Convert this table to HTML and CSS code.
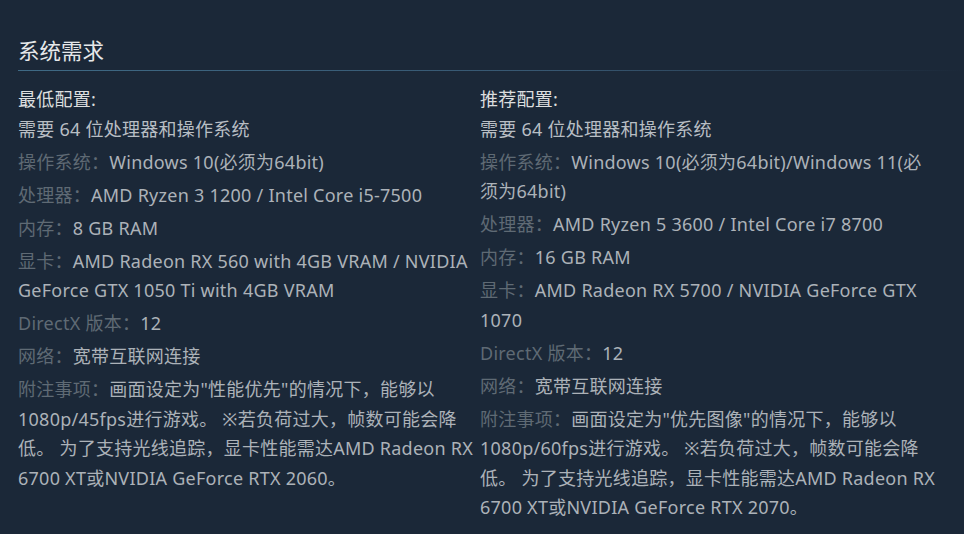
FILE: index.html
```html
<!DOCTYPE html>
<html lang="zh-CN">
<head>
<meta charset="utf-8">
<title>系统需求</title>
<link rel="stylesheet" href="styles.css">
</head>
<body>
<section class="sysreq">
  <h2 class="sysreq-title">系统需求</h2>
  <div class="sysreq-cols">
    <div class="col">
      <ul class="req-list">
        <li class="req-head"><strong class="req-head-label">最低配置:</strong><br>需要 64 位处理器和操作系统</li>
        <li><span class="lbl">操作系统：</span>Windows 10(必须为64bit)</li>
        <li><span class="lbl">处理器：</span>AMD Ryzen 3 1200 / Intel Core i5-7500</li>
        <li><span class="lbl">内存：</span>8 GB RAM</li>
        <li><span class="lbl">显卡：</span>AMD Radeon RX 560 with 4GB VRAM / NVIDIA GeForce GTX 1050 Ti with 4GB VRAM</li>
        <li><span class="lbl">DirectX 版本：</span>12</li>
        <li><span class="lbl">网络：</span>宽带互联网连接</li>
        <li><span class="lbl">附注事项：</span>画面设定为"性能优先"的情况下，能够以1080p/45fps进行游戏。 ※若负荷过大，帧数可能会降<br>低。 为了支持光线追踪，显卡性能需达AMD Radeon RX 6700 XT或NVIDIA GeForce RTX 2060。</li>
      </ul>
    </div>
    <div class="col">
      <ul class="req-list">
        <li class="req-head"><strong class="req-head-label">推荐配置:</strong><br>需要 64 位处理器和操作系统</li>
        <li><span class="lbl">操作系统：</span>Windows 10(必须为64bit)/Windows 11(必<br>须为64bit)</li>
        <li><span class="lbl">处理器：</span>AMD Ryzen 5 3600 / Intel Core i7 8700</li>
        <li><span class="lbl">内存：</span>16 GB RAM</li>
        <li><span class="lbl">显卡：</span>AMD Radeon RX 5700 / NVIDIA GeForce GTX 1070</li>
        <li><span class="lbl">DirectX 版本：</span>12</li>
        <li><span class="lbl">网络：</span>宽带互联网连接</li>
        <li><span class="lbl">附注事项：</span>画面设定为"优先图像"的情况下，能够以1080p/60fps进行游戏。 ※若负荷过大，帧数可能会降<br>低。 为了支持光线追踪，显卡性能需达AMD Radeon RX 6700 XT或NVIDIA GeForce RTX 2070。</li>
      </ul>
    </div>
  </div>
</section>
</body>
</html>
```

FILE: styles.css
```css
html, body {
  margin: 0;
  padding: 0;
  background: #1b2838;
}

body {
  font-family: "Noto Sans", "Noto Sans CJK SC", sans-serif;
  color: #acb2b8;
  width: 964px;
  height: 534px;
  overflow: hidden;
}

.sysreq {
  padding: 36px 18px 0 18px;
}

.sysreq-title {
  margin: 0;
  font-size: 21.5px;
  line-height: 29px;
  font-weight: normal;
  color: #e6e8ea;
  padding-bottom: 5px;
}

.sysreq-title::after {
  content: "";
  display: block;
  height: 1px;
  margin-right: -18px;
  background: linear-gradient(to right, #3f6a85 0%, #36556f 60%, #1b2838 100%);
  position: relative;
  top: 6px;
  margin-top: -1px;
}

.sysreq-cols {
  display: grid;
  grid-template-columns: 460px 460px;
  column-gap: 2px;
  margin-top: 15px;
}

.req-list {
  list-style: none;
  margin: 0;
  padding: 0;
  font-size: 18px;
  line-height: 29.5px;
  letter-spacing: 0.25px;
}

.req-list li {
  margin-bottom: 3.5px;
}

.req-head {
  color: #b8bec4;
}

.req-head-label {
  font-weight: normal;
  color: #dcdedf;
}

.lbl {
  color: #5f6a74;
}
```
